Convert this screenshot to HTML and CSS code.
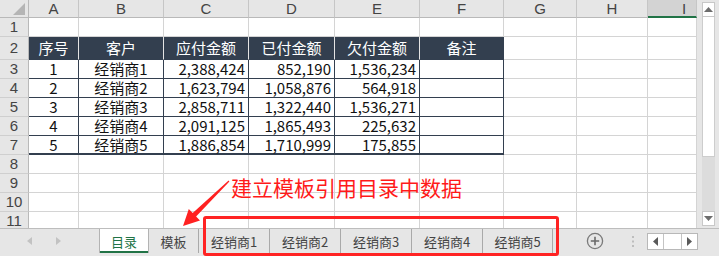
FILE: index.html
```html
<!DOCTYPE html>
<html lang="zh-CN">
<head>
    <meta charset="UTF-8">
    <title>目录</title>
    <link rel="stylesheet" href="styles.css">
</head>
<body>
<div class="app">
    <div class="main">
        <div class="sheet">
            <!-- 列标题 -->
            <div class="c corner"><svg width="12" height="12" viewBox="0 0 12 12"><polygon points="12,0 12,12 0,12" fill="#b5b5b5"/></svg></div>
            <div class="c ch">A</div>
            <div class="c ch">B</div>
            <div class="c ch">C</div>
            <div class="c ch">D</div>
            <div class="c ch">E</div>
            <div class="c ch">F</div>
            <div class="c ch">G</div>
            <div class="c ch">H</div>
            <div class="c ch sel">I</div>

            <!-- 第1行 -->
            <div class="c rh">1</div>
            <div class="c"></div><div class="c"></div><div class="c"></div><div class="c"></div><div class="c"></div><div class="c"></div><div class="c"></div><div class="c"></div><div class="c"></div>

            <!-- 表头 -->
            <div class="c rh">2</div>
            <div class="c hd">序号</div>
            <div class="c hd">客户</div>
            <div class="c hd">应付金额</div>
            <div class="c hd">已付金额</div>
            <div class="c hd">欠付金额</div>
            <div class="c hd end">备注</div>
            <div class="c"></div><div class="c"></div><div class="c"></div>

            <div class="c rh">3</div>
            <div class="c dt ctr">1</div>
            <div class="c dt ctr">经销商1</div>
            <div class="c dt num">2,388,424</div>
            <div class="c dt num">852,190</div>
            <div class="c dt num">1,536,234</div>
            <div class="c dt"></div>
            <div class="c"></div><div class="c"></div><div class="c"></div>

            <div class="c rh">4</div>
            <div class="c dt ctr">2</div>
            <div class="c dt ctr">经销商2</div>
            <div class="c dt num">1,623,794</div>
            <div class="c dt num">1,058,876</div>
            <div class="c dt num">564,918</div>
            <div class="c dt"></div>
            <div class="c"></div><div class="c"></div><div class="c"></div>

            <div class="c rh">5</div>
            <div class="c dt ctr">3</div>
            <div class="c dt ctr">经销商3</div>
            <div class="c dt num">2,858,711</div>
            <div class="c dt num">1,322,440</div>
            <div class="c dt num">1,536,271</div>
            <div class="c dt"></div>
            <div class="c"></div><div class="c"></div><div class="c"></div>

            <div class="c rh">6</div>
            <div class="c dt ctr">4</div>
            <div class="c dt ctr">经销商4</div>
            <div class="c dt num">2,091,125</div>
            <div class="c dt num">1,865,493</div>
            <div class="c dt num">225,632</div>
            <div class="c dt"></div>
            <div class="c"></div><div class="c"></div><div class="c"></div>

            <div class="c rh">7</div>
            <div class="c dt last ctr">5</div>
            <div class="c dt last ctr">经销商5</div>
            <div class="c dt last num">1,886,854</div>
            <div class="c dt last num">1,710,999</div>
            <div class="c dt last num">175,855</div>
            <div class="c dt last"></div>
            <div class="c"></div><div class="c"></div><div class="c"></div>

            <div class="c rh">8</div>
            <div class="c"></div><div class="c"></div><div class="c"></div><div class="c"></div><div class="c"></div><div class="c"></div><div class="c"></div><div class="c"></div><div class="c"></div>
            <div class="c rh">9</div>
            <div class="c"></div><div class="c"></div><div class="c"></div><div class="c"></div><div class="c"></div><div class="c"></div><div class="c"></div><div class="c"></div><div class="c"></div>
            <div class="c rh">10</div>
            <div class="c"></div><div class="c"></div><div class="c"></div><div class="c"></div><div class="c"></div><div class="c"></div><div class="c"></div><div class="c"></div><div class="c"></div>
            <div class="c rh">11</div>
            <div class="c"></div><div class="c"></div><div class="c"></div><div class="c"></div><div class="c"></div><div class="c"></div><div class="c"></div><div class="c"></div><div class="c"></div>
        </div>

        <!-- 竖向滚动条 -->
        <div class="vscroll">
            <div class="sbtn"><svg width="9" height="5" viewBox="0 0 9 5"><polygon points="0,5 9,5 4.5,0" fill="#6d6d6d"/></svg></div>
            <div class="thumb"></div>
            <div class="track"></div>
            <div class="sbtn"><svg width="9" height="5" viewBox="0 0 9 5"><polygon points="0,0 9,0 4.5,5" fill="#6d6d6d"/></svg></div>
        </div>
    </div>

    <!-- 工作表标签 -->
    <div class="tabbar">
        <div class="nav">
            <svg width="5" height="8" viewBox="0 0 5 8"><polygon points="5,0 5,8 0,4" fill="#c2c2c2"/></svg>
            <svg width="5" height="8" viewBox="0 0 5 8"><polygon points="0,0 0,8 5,4" fill="#c2c2c2"/></svg>
        </div>
        <div class="tab on">目录</div>
        <div class="tab small">模板</div>
        <div class="tab">经销商1</div>
        <div class="tab">经销商2</div>
        <div class="tab">经销商3</div>
        <div class="tab">经销商4</div>
        <div class="tab end">经销商5</div>
        <div class="tools">
            <svg class="plus" width="18" height="18" viewBox="0 0 18 18"><circle cx="9" cy="9" r="7.6" fill="none" stroke="#7a7a7a" stroke-width="1.3"/><path d="M9 4.8V13.2M4.8 9H13.2" stroke="#6a6a6a" stroke-width="1.6"/></svg>
            <svg class="dots" width="2" height="11" viewBox="0 0 2 11"><rect x="0" y="0" width="2" height="2" fill="#bdbdbd"/><rect x="0" y="4.5" width="2" height="2" fill="#bdbdbd"/><rect x="0" y="9" width="2" height="2" fill="#bdbdbd"/></svg>
        </div>
        <div class="hscroll">
            <div class="hbtn"><svg width="5" height="9" viewBox="0 0 5 9"><polygon points="5,0 5,9 0,4.5" fill="#5a5a5a"/></svg></div>
            <div class="hthumb"></div>
            <div class="hbtn"><svg width="5" height="9" viewBox="0 0 5 9"><polygon points="0,0 0,9 5,4.5" fill="#5a5a5a"/></svg></div>
        </div>
    </div>

    <!-- 标注 -->
    <div class="note">建立模板引用目录中数据</div>
    <svg class="arrow" width="719" height="256" viewBox="0 0 719 256">
        <polygon points="228.6,180.6 229.4,181.4 196.1,216.6 200,220.5 183,226 188.8,209.1 192.7,213" fill="#ff2121"/>
    </svg>
    <div class="mark"></div>
</div>
</body>
</html>
```

FILE: styles.css
```css
body {
    margin: 0;
    background: #fff;
    font-family: "Noto Sans CJK SC", "Liberation Sans", sans-serif;
}

.app {
    position: relative;
    width: 719px;
    height: 256px;
    overflow: hidden;
}

.main {
    display: flex;
    height: 228px;
}

/* 表格区 */
.sheet {
    display: grid;
    grid-template-columns: 29px 50px 85px 85px 86px 85px 84px 73px 71px 49px;
    grid-template-rows: 18px 19px 23px repeat(9, 19px);
    width: 697px;
    height: 228px;
    overflow: hidden;
}

.c {
    box-sizing: border-box;
    border-right: 1px solid #d4d4d4;
    border-bottom: 1px solid #d4d4d4;
    display: flex;
    align-items: center;
    justify-content: center;
    font-size: 15px;
    line-height: 16px;
    color: #111;
    white-space: nowrap;
}

.corner {
    background: #e6e6e6;
    border-right-color: #b9b9b9;
    border-bottom-color: #b9b9b9;
    justify-content: flex-end;
    align-items: flex-end;
    padding: 0 3px 2px 0;
}

.ch {
    background: #e6e6e6;
    color: #444;
    font-family: "Liberation Sans", sans-serif;
    font-size: 15px;
    border-right-color: #c6c6c6;
    border-bottom-color: #b9b9b9;
    padding-top: 1px;
}

.ch.sel {
    background: #d3d3d3;
    border-bottom: 2px solid #217346;
    justify-content: flex-start;
    padding-left: 34px;
}

.rh {
    background: #e6e6e6;
    color: #444;
    font-family: "Liberation Sans", sans-serif;
    font-size: 15px;
    border-right-color: #b9b9b9;
    border-bottom-color: #cfcfcf;
}

.hd {
    background: #333f4f;
    color: #fff;
    border-right-color: #e4e4e4;
    border-bottom-color: #333f4f;
}

.hd.end {
    border-right-color: #333f4f;
}

.dt {
    border-right-color: #333f4f;
    border-bottom-color: #333f4f;
}

.dt.last {
    border-bottom-width: 2px;
    padding-top: 1px;
}

.num {
    justify-content: flex-end;
    padding-right: 3px;
}

/* 竖向滚动条 */
.vscroll {
    width: 22px;
    background: #e6e6e6;
    display: flex;
    flex-direction: column;
    padding: 2px 4px 2px 5px;
    box-sizing: border-box;
}

.sbtn {
    height: 15px;
    background: #fff;
    border: 1px solid #c8c8c8;
    box-sizing: border-box;
    display: flex;
    align-items: center;
    justify-content: center;
}

.thumb {
    height: 140px;
    background: #fff;
    border: 1px solid #cdcdcd;
    border-top: 0;
    box-sizing: border-box;
}

.track {
    flex: 1;
    background: #dcdcdc;
}

/* 标签栏 */
.tabbar {
    display: flex;
    height: 28px;
    box-sizing: border-box;
    border-top: 1px solid #bdbdbd;
    background: #e6e6e6;
    font-size: 13px;
    color: #444;
}

.nav {
    width: 100px;
    display: flex;
    align-items: center;
    gap: 24px;
    padding-left: 27px;
    box-sizing: border-box;
    border-right: 1px solid #b3b3b3;
    height: 24px;
}

.tab {
    width: 71px;
    height: 24px;
    display: flex;
    align-items: center;
    justify-content: center;
    box-sizing: border-box;
    border-right: 1px solid #a9a9a9;
}

.tab.small {
    width: 50px;
}

.tab.on {
    width: 49px;
    background: #fff;
    color: #217346;
    box-shadow: inset 0 -2px #217346;
    border-right-color: #b3b3b3;
}

.tab.end {
    width: 70px;
}

.tools {
    display: flex;
    align-items: center;
    height: 24px;
}

.plus {
    margin-left: 33px;
}

.dots {
    margin-left: 28px;
}

.hscroll {
    display: flex;
    margin: 4px 0 0 auto;
    margin-right: 21px;
    height: 17px;
    border: 1px solid #b8b8b8;
    box-sizing: border-box;
    background: #fff;
}

.hbtn {
    width: 15px;
    display: flex;
    align-items: center;
    justify-content: center;
}

.hthumb {
    width: 17px;
    border-left: 1px solid #c4c4c4;
    border-right: 1px solid #c4c4c4;
}

/* 标注 */
.note {
    position: absolute;
    left: 231px;
    top: 174px;
    font-size: 21px;
    line-height: 26px;
    color: #ff1a1a;
    white-space: nowrap;
}

.arrow {
    position: absolute;
    left: 0;
    top: 0;
    pointer-events: none;
}

.mark {
    position: absolute;
    left: 203px;
    top: 216px;
    width: 356px;
    height: 40px;
    box-sizing: border-box;
    border: 3px solid #ff2323;
    border-radius: 3px;
}
```
